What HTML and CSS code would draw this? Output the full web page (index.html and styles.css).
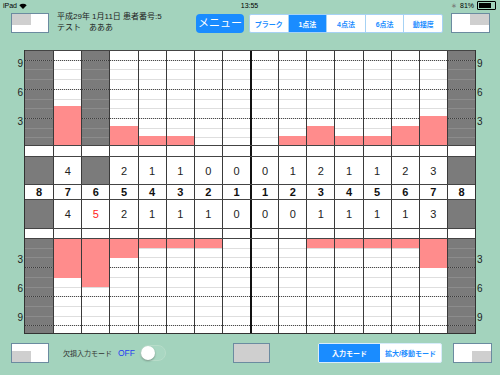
FILE: index.html
```html
<!DOCTYPE html>
<html lang="ja">
<head>
    <meta charset="UTF-8">
    <title>歯周検査 1点法</title>
    <link rel="stylesheet" href="styles.css">
</head>
<body>
    <div class="status">
        <div class="st-left">iPad
            <svg class="wifi" width="8" height="6" viewBox="0 0 8 6"><path d="M4 6 L0.3 2.2 A5.5 5.5 0 0 1 7.7 2.2 Z" fill="#000"/></svg>
        </div>
        <div class="st-time">13:55</div>
        <div class="st-right">
            <span class="bt">&#8727;</span>
            <span>81%</span>
            <span class="battery"><span class="level"></span></span>
        </div>
    </div>

    <header class="top">
        <div class="thumb tl"><span></span></div>
        <div class="info">
            <div>平成29年 1月11日 患者番号:5</div>
            <div>テスト　あああ</div>
        </div>
        <div class="menu">メニュー</div>
        <div class="seg seg-exam">
            <span>プラーク</span>
            <span class="on">1点法</span>
            <span>4点法</span>
            <span>6点法</span>
            <span>動揺度</span>
        </div>
        <div class="thumb tr"><span></span></div>
    </header>

    <main class="board">
        <div class="axis left">
            <div class="ticks up"><span>9</span><span>6</span><span>3</span></div>
            <div class="ticks down"><span>3</span><span>6</span><span>9</span></div>
        </div>

        <div class="chart">
            <div class="row plot up">
                <div class="x"></div>
                <div><span class="bar" style="--v:4"></span></div>
                <div class="x"></div>
                <div><span class="bar" style="--v:2"></span></div>
                <div><span class="bar" style="--v:1"></span></div>
                <div><span class="bar" style="--v:1"></span></div>
                <div></div>
                <div></div>
                <div></div>
                <div><span class="bar" style="--v:1"></span></div>
                <div><span class="bar" style="--v:2"></span></div>
                <div><span class="bar" style="--v:1"></span></div>
                <div><span class="bar" style="--v:1"></span></div>
                <div><span class="bar" style="--v:2"></span></div>
                <div><span class="bar" style="--v:3"></span></div>
                <div class="x"></div>
            </div>
            <div class="row blank up-gap">
                <div></div><div></div><div></div><div></div><div></div><div></div><div></div><div></div>
                <div></div><div></div><div></div><div></div><div></div><div></div><div></div><div></div>
            </div>
            <div class="row nums up-nums">
                <div class="x"></div><div>4</div><div class="x"></div><div>2</div>
                <div>1</div><div>1</div><div>0</div><div>0</div>
                <div>0</div><div>1</div><div>2</div><div>1</div>
                <div>1</div><div>2</div><div>3</div><div class="x"></div>
            </div>
            <div class="row teeth">
                <div>8</div><div>7</div><div>6</div><div>5</div><div>4</div><div>3</div><div>2</div><div>1</div>
                <div>1</div><div>2</div><div>3</div><div>4</div><div>5</div><div>6</div><div>7</div><div>8</div>
            </div>
            <div class="row nums down-nums">
                <div class="x"></div><div>4</div><div class="red">5</div><div>2</div>
                <div>1</div><div>1</div><div>1</div><div>0</div>
                <div>0</div><div>0</div><div>1</div><div>1</div>
                <div>1</div><div>1</div><div>3</div><div class="x"></div>
            </div>
            <div class="row blank down-gap">
                <div></div><div></div><div></div><div></div><div></div><div></div><div></div><div></div>
                <div></div><div></div><div></div><div></div><div></div><div></div><div></div><div></div>
            </div>
            <div class="row plot down">
                <div class="x"></div>
                <div><span class="bar" style="--v:4"></span></div>
                <div><span class="bar" style="--v:5"></span></div>
                <div><span class="bar" style="--v:2"></span></div>
                <div><span class="bar" style="--v:1"></span></div>
                <div><span class="bar" style="--v:1"></span></div>
                <div><span class="bar" style="--v:1"></span></div>
                <div></div>
                <div></div>
                <div></div>
                <div><span class="bar" style="--v:1"></span></div>
                <div><span class="bar" style="--v:1"></span></div>
                <div><span class="bar" style="--v:1"></span></div>
                <div><span class="bar" style="--v:1"></span></div>
                <div><span class="bar" style="--v:3"></span></div>
                <div class="x"></div>
            </div>
        </div>

        <div class="axis right">
            <div class="ticks up"><span>9</span><span>6</span><span>3</span></div>
            <div class="ticks down"><span>3</span><span>6</span><span>9</span></div>
        </div>
    </main>

    <footer class="bottom">
        <div class="thumb bl"><span></span></div>
        <span class="mode-label">欠損入力モード</span>
        <span class="off">OFF</span>
        <div class="toggle"><span class="knob"></span></div>
        <div class="gray-btn"></div>
        <div class="seg seg-mode">
            <span class="on">入力モード</span>
            <span>拡大/移動モード</span>
        </div>
        <div class="thumb br"><span></span></div>
    </footer>
</body>
</html>
```

FILE: styles.css
```css
body {
    margin: 0;
    width: 500px;
    height: 375px;
    overflow: hidden;
    background: #a3d3bd;
    font-family: 'Liberation Sans', 'Noto Sans CJK JP', sans-serif;
    color: #222;
}

/* status bar */
.status {
    display: flex;
    align-items: center;
    height: 11px;
    padding: 0 4px 0 3px;
    font-size: 7px;
    color: #000;
}
.st-left, .st-right {
    flex: 1;
    display: flex;
    align-items: center;
    gap: 2px;
}
.st-right {
    justify-content: flex-end;
}
.bt {
    color: #777;
    margin-right: 1px;
}
.battery {
    display: flex;
    width: 15px;
    height: 5px;
    border: 1px solid #000;
    border-radius: 1px;
    padding: 1px;
    margin-left: 1px;
}
.level {
    width: 81%;
    background: #000;
}

/* header */
.top {
    display: flex;
    align-items: flex-end;
    height: 21px;
    margin-top: 1px;
    padding: 0 10px 0 11px;
}
.thumb {
    display: flex;
    box-sizing: border-box;
    width: 38px;
    height: 20px;
    background: #fff;
    border: 1px solid #6b8ba0;
}
.thumb span {
    width: 19px;
    height: 11px;
    background: #cfcfcf;
}
.thumb.tr {
    width: 39px;
    justify-content: flex-end;
}
.thumb.bl {
    align-items: flex-end;
}
.thumb.br {
    width: 39px;
    justify-content: flex-end;
    align-items: flex-end;
}
.info {
    flex: 1;
    margin-left: 8px;
    align-self: center;
    font-size: 8px;
    line-height: 10.5px;
    color: #222;
}
.menu {
    width: 48px;
    height: 19px;
    line-height: 19px;
    text-align: center;
    background: #1a8cff;
    color: #fff;
    border-radius: 4px;
    font-size: 11px;
}
.seg {
    display: flex;
    box-sizing: border-box;
    height: 19px;
    background: #fff;
    border: 1px solid #a6d2f4;
    border-radius: 2px;
}
.seg span {
    flex: 1;
    display: flex;
    align-items: center;
    justify-content: center;
    border-left: 1px solid #a6d2f4;
    color: #1a8cff;
    font-size: 7px;
    font-weight: bold;
}
.seg span:first-child {
    border-left: 0;
}
.seg span.on {
    background: #1a8cff;
    color: #fff;
}
.seg-exam {
    width: 194px;
    margin: 0 8px 0 5px;
}

/* chart board */
.board {
    display: flex;
    height: 284px;
    margin-top: 17px;
}
.axis {
    width: 24px;
    display: flex;
    flex-direction: column;
    justify-content: space-between;
    font-size: 10px;
    color: #222;
}
.axis.left {
    text-align: right;
}
.axis.left span {
    padding-right: 1px;
}
.axis.right span {
    padding-left: 1px;
}
.ticks {
    height: 97px;
    box-sizing: border-box;
}
.ticks span {
    display: block;
    height: 29px;
    line-height: 12px;
}
.ticks.up {
    padding-top: 8px;
}
.ticks.down {
    padding-top: 17px;
}

.chart {
    width: 452px;
    box-sizing: border-box;
    border-left: 1px solid #333;
    border-right: 1px solid #333;
    border-bottom: 1px solid #333;
    display: flex;
    flex-direction: column;
}
.row {
    display: grid;
    grid-template-columns: repeat(16, 1fr);
    border-top: 1px solid #444;
    background: #fff;
}
.row > div {
    box-sizing: border-box;
    border-left: 1px solid #3a3a3a;
}
.row > div:first-child {
    border-left: 0;
}
.row > div:nth-child(9) {
    border-left: 2px solid #111;
}

.plot {
    height: 97px;
}
.plot > div {
    display: flex;
    flex-direction: column;
    background:
        linear-gradient(90deg, #4a4a4a 50%, transparent 0) 0 var(--d1) / 2px 1px repeat-x,
        linear-gradient(90deg, #4a4a4a 50%, transparent 0) 0 var(--d2) / 2px 1px repeat-x,
        linear-gradient(90deg, #4a4a4a 50%, transparent 0) 0 var(--d3) / 2px 1px repeat-x,
        repeating-linear-gradient(180deg, transparent 0 8.7px, #dedede 8.7px 9.7px),
        #fff;
}
.plot > div.x {
    background:
        linear-gradient(90deg, #3c3c3c 50%, transparent 0) 0 var(--d1) / 2px 1px repeat-x,
        linear-gradient(90deg, #3c3c3c 50%, transparent 0) 0 var(--d2) / 2px 1px repeat-x,
        linear-gradient(90deg, #3c3c3c 50%, transparent 0) 0 var(--d3) / 2px 1px repeat-x,
        repeating-linear-gradient(180deg, transparent 0 8.7px, #8c8c8c 8.7px 9.7px),
        #7b7b7b;
}
.plot.up {
    --d1: 9px;
    --d2: 38px;
    --d3: 67px;
}
.plot.up > div {
    justify-content: flex-end;
}
.plot.down {
    --d1: 28px;
    --d2: 57px;
    --d3: 86px;
}
.plot.down > div {
    justify-content: flex-start;
}
.bar {
    height: calc(var(--v) * 9.7px);
    background: #ff8c8c;
}

.blank.up-gap {
    height: 10px;
}
.blank.down-gap {
    height: 9px;
}
.nums > div, .teeth > div {
    display: flex;
    align-items: center;
    justify-content: center;
    font-size: 11px;
}
.up-nums {
    height: 28px;
}
.down-nums {
    height: 29px;
}
.teeth {
    height: 14px;
}
.teeth > div {
    font-weight: bold;
    color: #111;
}
.nums > div.x {
    background: #7b7b7b;
}
.nums > div.red {
    color: #ff1a1a;
}

/* footer */
.bottom {
    display: flex;
    align-items: center;
    height: 20px;
    margin-top: 9px;
    padding-left: 11px;
}
.bottom .thumb {
    height: 20px;
}
.mode-label {
    margin-left: 14px;
    font-size: 7px;
    color: #333;
}
.off {
    margin-left: 6px;
    font-size: 8.5px;
    color: #2440f0;
}
.toggle {
    display: flex;
    align-items: center;
    box-sizing: border-box;
    width: 26px;
    height: 16px;
    margin-left: 5px;
    border: 1px solid #b7dcc9;
    border-radius: 8px;
    background: #a9d7c2;
}
.knob {
    width: 14px;
    height: 14px;
    border-radius: 50%;
    background: #fff;
    box-shadow: 0 1px 2px #0005;
}
.gray-btn {
    box-sizing: border-box;
    width: 37px;
    height: 20px;
    margin-left: 67px;
    background: #cfcfcf;
    border: 1px solid #6b8ba0;
}
.seg-mode {
    width: 124px;
    height: 20px;
    margin: 0 11px 0 48px;
    border-color: #d8ecfb;
}
.seg-mode span {
    border-left: 0;
}
```
